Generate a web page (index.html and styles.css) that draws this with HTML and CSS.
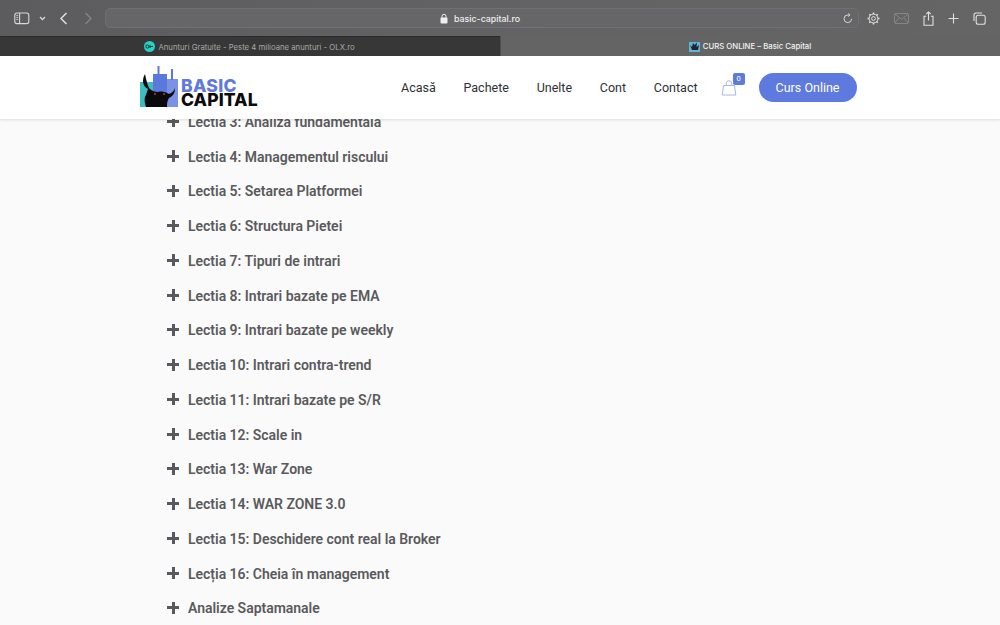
FILE: index.html
```html
<!DOCTYPE html>
<html lang="ro">
<head>
<meta charset="utf-8">
<title>CURS ONLINE – Basic Capital</title>
<link rel="stylesheet" href="styles.css">
</head>
<body>
<div class="chrome">
  <div class="toolbar">
    <div class="tb-left">
      <svg class="ic" width="16" height="13" viewBox="0 0 16 13" fill="none" stroke="#d8d8d8" stroke-width="1.1"><rect x=".8" y="1" width="14" height="10.6" rx="2.2"/><path d="M5.6 1v10.6"/><path d="M2.3 3.4h1.9M2.3 5.4h1.9M2.3 7.4h1.9" stroke-width=".9"/></svg>
      <svg class="ic chev" width="7" height="5" viewBox="0 0 7 5" fill="none" stroke="#d8d8d8" stroke-width="1.3"><path d="M1 1l2.5 2.5L6 1"/></svg>
      <svg class="ic back" width="9" height="13" viewBox="0 0 9 13" fill="none" stroke="#e0e0e0" stroke-width="1.5"><path d="M7.5 1L2 6.5 7.5 12"/></svg>
      <svg class="ic fwd" width="9" height="13" viewBox="0 0 9 13" fill="none" stroke="#838383" stroke-width="1.5"><path d="M1.5 1L7 6.5 1.5 12"/></svg>
    </div>
    <div class="address">
      <span class="addr-center">
        <svg width="8" height="11" viewBox="0 0 8 11"><path d="M2 5V3.3a2 2 0 014 0V5" fill="none" stroke="#eee" stroke-width="1"/><rect x=".5" y="4.6" width="7" height="5.9" rx="1" fill="#eee"/></svg>
        <span>basic-capital.ro</span>
      </span>
      <svg class="reload" width="10" height="11" viewBox="0 0 10 11" fill="none" stroke="#d4d4d4" stroke-width="1"><path d="M8.6 5.8A3.8 3.8 0 114.9 2h2"/><path d="M5.3.5l1.7 1.5-1.7 1.5"/></svg>
    </div>
    <div class="tb-right">
      <svg width="13" height="13" viewBox="0 0 13 13" fill="none" stroke="#e0e0e0"><circle cx="6.5" cy="6.5" r="1.9"/><circle cx="6.5" cy="6.5" r="4.4"/><path d="M6.5.5v1.6M6.5 10.9v1.6M.5 6.5h1.6M10.9 6.5h1.6M2.3 2.3l1.1 1.1M9.6 9.6l1.1 1.1M2.3 10.7l1.1-1.1M9.6 3.4l1.1-1.1" stroke-width="1.5"/></svg>
      <svg width="15" height="11" viewBox="0 0 15 11" fill="none" stroke="#858585"><rect x=".5" y=".5" width="14" height="10" rx="1.5"/><path d="M.8 1l6.7 5.2L14.2 1M.8 10l4.5-5.3M14.2 10L9.7 4.7"/></svg>
      <svg width="11" height="15" viewBox="0 0 11 15" fill="none" stroke="#e0e0e0" stroke-width="1.1"><path d="M3.2 5.3H1v9h9v-9H7.8"/><path d="M5.5 9.5V.9M3.3 3l2.2-2.1L7.7 3"/></svg>
      <svg width="11" height="11" viewBox="0 0 11 11" fill="none" stroke="#e0e0e0" stroke-width="1.1"><path d="M5.5.5v10M.5 5.5h10"/></svg>
      <svg width="13" height="13" viewBox="0 0 13 13" fill="none" stroke="#e0e0e0" stroke-width="1.1"><rect x="3.2" y="3.2" width="9" height="9" rx="2"/><path d="M1 9V3a2 2 0 012-2h6"/></svg>
    </div>
  </div>
  <div class="tabs">
    <div class="tab tab-off">
      <svg width="11" height="11" viewBox="0 0 11 11"><circle cx="5.5" cy="5.5" r="5.5" fill="#23d3c4"/><circle cx="3.4" cy="5.5" r="1.6" fill="none" stroke="#12302e" stroke-width="1"/><path d="M6 4v3M6 5.5h3" stroke="#12302e" stroke-width="1"/></svg>
      <span>Anunturi Gratuite - Peste 4 milioane anunturi - OLX.ro</span>
    </div>
    <div class="tab tab-on">
      <svg width="11" height="11" viewBox="0 0 11 11"><rect y="1" width="11" height="10" fill="#5fb4d8"/><path d="M1 4l2 2 1-4 1.500 2L8 1.500 7.500 6 10 4l-1 5H3z" fill="#20252c"/></svg>
      <span>CURS ONLINE – Basic Capital</span>
    </div>
  </div>
</div>

<div class="page">
  <header class="site-header">
    <a class="logo" href="#">
      <svg class="logo-mark" width="38" height="41" viewBox="0 0 38 41">
        <rect x="0" y="16" width="13" height="25" fill="#3dbdc0"/>
        <rect x="13" y="8" width="14" height="33" fill="#5b78dc"/>
        <rect x="17.500" y="0" width="2" height="9" fill="#5b78dc"/>
        <rect x="27" y="13" width="11" height="28" fill="#7b92e4"/>
        <rect x="31" y="3" width="2" height="11" fill="#5b78dc"/>
        <path d="M5 8C2 13 2 20 8 23c-1 3-2 6-3 8-1 3 0 7 1 10h21c0-3 0-6 2-9 4-2 6-5 6-10-1 3-3 5-6 6-3-2-7-3-11-2-3 0-6-1-8-3-2-2-3-6-5-15z" fill="#0a0a0c"/>
        <circle cx="15" cy="28" r=".9" fill="#d8412f"/><circle cx="24" cy="28" r=".9" fill="#d8412f"/>
      </svg>
      <span class="logo-text"><span class="logo-top">BASIC</span><span class="logo-bot">CAPITAL</span></span>
    </a>
    <nav class="nav">
      <a href="#">Acasă</a>
      <a href="#">Pachete</a>
      <a href="#">Unelte</a>
      <a href="#">Cont</a>
      <a href="#">Contact</a>
    </nav>
    <div class="cart">
      <svg width="16" height="16" viewBox="0 0 16 16" fill="none" stroke="#a9b6ec" stroke-width="1"><path d="M2.500 5.500h11l1.300 9.500H1.200z"/><path d="M5.200 6V3.500a2.800 2.800 0 015.600 0V6"/></svg>
      <span class="badge">0</span>
    </div>
    <a class="cta" href="#">Curs Online</a>
  </header>
  <main class="lessons">
    <div class="lesson"><span class="plus"></span><span>Lectia 3: Analiza fundamentala</span></div>
    <div class="lesson"><span class="plus"></span><span>Lectia 4: Managementul riscului</span></div>
    <div class="lesson"><span class="plus"></span><span>Lectia 5: Setarea Platformei</span></div>
    <div class="lesson"><span class="plus"></span><span>Lectia 6: Structura Pietei</span></div>
    <div class="lesson"><span class="plus"></span><span>Lectia 7: Tipuri de intrari</span></div>
    <div class="lesson"><span class="plus"></span><span>Lectia 8: Intrari bazate pe EMA</span></div>
    <div class="lesson"><span class="plus"></span><span>Lectia 9: Intrari bazate pe weekly</span></div>
    <div class="lesson"><span class="plus"></span><span>Lectia 10: Intrari contra-trend</span></div>
    <div class="lesson"><span class="plus"></span><span>Lectia 11: Intrari bazate pe S/R</span></div>
    <div class="lesson"><span class="plus"></span><span>Lectia 12: Scale in</span></div>
    <div class="lesson"><span class="plus"></span><span>Lectia 13: War Zone</span></div>
    <div class="lesson"><span class="plus"></span><span>Lectia 14: WAR ZONE 3.0</span></div>
    <div class="lesson"><span class="plus"></span><span>Lectia 15: Deschidere cont real la Broker</span></div>
    <div class="lesson"><span class="plus"></span><span>Lecția 16: Cheia în management</span></div>
    <div class="lesson"><span class="plus"></span><span>Analize Saptamanale</span></div>
  </main>
</div>
</body>
</html>
```

FILE: styles.css
```css
* { box-sizing: border-box; }
html, body { margin: 0; height: 100%; overflow: hidden; }
body { font-family: Roboto, "Liberation Sans", sans-serif; background: #fafafa; display: flex; flex-direction: column; }
a { text-decoration: none; color: inherit; }

.chrome { flex: none; height: 56px; background: #636363; }
.toolbar { height: 36px; display: flex; align-items: center; background: linear-gradient(90deg, #5c5c5e 0%, #626264 45%, #656565 100%); }
.tb-left { width: 105px; flex: none; display: flex; align-items: center; padding-left: 14px; }
.chev { margin-left: 9px; }
.back { margin-left: 13px; }
.fwd { margin-left: 16px; }
.address { position: relative; width: 754px; height: 20px; border-radius: 5px; background: #666668; border: 1px solid #707072; display: flex; align-items: center; justify-content: center; }
.addr-center { display: flex; align-items: center; gap: 6px; color: #efefef; font: 500 8.800px "Inter", "Liberation Sans", sans-serif; margin-left: -4px; }
.reload { position: absolute; right: 5px; top: 4px; }
.tb-right { flex: 1; display: flex; align-items: center; padding-left: 8px; gap: 14px; }

.tabs { height: 20px; display: flex; }
.tab { width: 50%; display: flex; align-items: center; justify-content: center; gap: 3px; font: 7.750px "Inter", "Liberation Sans", sans-serif; }
.tab-off { background: #373737; color: #a8a8a8; border-top: 1px solid #2a2a2a; padding-right: 1px; }
.tab-on { background: #646464; color: #f2f2f2; font-weight: 500; border-left: 1px solid #505050; padding-right: 1px; }

.page { flex: 1; min-height: 0; overflow: hidden; }
.site-header { position: relative; z-index: 2; height: 63px; background: #fff; box-shadow: 0 1px 3px rgba(0,0,0,.12); display: flex; align-items: center; padding-left: 140px; }
.logo { display: flex; align-items: flex-end; width: 261px; height: 41px; margin-top: -3px; }
.logo-mark { flex: none; }
.logo-text { display: flex; flex-direction: column; margin-left: 3px; font-family: Inter, "Liberation Sans", sans-serif; font-weight: 800; line-height: 14px; }
.logo-top { color: #6079dc; font-size: 17.500px; letter-spacing: .3px; }
.logo-bot { color: #0b0b0d; font-size: 17.500px; letter-spacing: .1px; }
.nav { display: flex; gap: 27.750px; font-size: 12.500px; color: #2d2f36; }
.cart { position: relative; margin-left: 23px; width: 16px; height: 16px; display: flex; }
.badge { position: absolute; left: 12px; top: -7px; width: 12px; height: 12px; border-radius: 2px; background: #5f7ade; color: #fff; font-size: 7.500px; text-align: center; line-height: 12px; }
.cta { margin-left: 22px; width: 98px; height: 29px; border-radius: 15px; background: #5f7ade; color: #fff; font-size: 12.500px; display: flex; align-items: center; justify-content: center; }

.lessons { margin-top: -14.500px; padding-left: 167px; display: flex; flex-direction: column; }
.lesson { height: 34.750px; display: flex; align-items: center; gap: 9px; font-size: 14px; font-weight: 600; letter-spacing: -.02px; color: #5a5a5e; flex: none; }
.plus { position: relative; width: 12px; height: 12px; flex: none; margin-top: -1px; }
.plus::before { content: ""; position: absolute; left: 0; right: 0; top: 4.500px; height: 3px; background: #5a5a5e; }
.plus::after { content: ""; position: absolute; top: 0; bottom: 0; left: 4.500px; width: 3px; background: #5a5a5e; }
```
